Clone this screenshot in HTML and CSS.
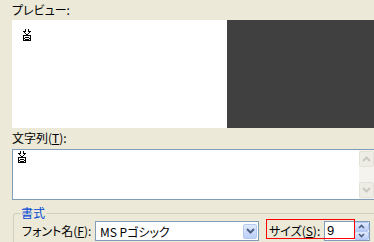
FILE: index.html
```html
<!DOCTYPE html>
<html lang="ja">
<head>
    <meta charset="UTF-8">
    <title>フォント設定</title>
    <link rel="stylesheet" href="styles.css">
</head>
<body>
    <!-- プレビュー -->
    <div class="caption">プレビュー:</div>
    <div class="preview">
        <div class="preview-sample">
            <svg class="glyph" width="8" height="12" viewBox="0 0 8 12" shape-rendering="crispEdges">
                <rect x="2" y="0" width="1" height="2"/><rect x="5" y="0" width="1" height="2"/>
                <rect x="0" y="2" width="3" height="1"/><rect x="5" y="2" width="3" height="1"/>
                <rect x="1" y="3" width="1" height="1"/><rect x="6" y="3" width="1" height="1"/>
                <rect x="2" y="4" width="1" height="1"/><rect x="5" y="4" width="1" height="1"/>
                <rect x="3" y="5" width="2" height="1"/>
                <rect x="0.5" y="6.5" width="7" height="5" fill="none" stroke="#000"/>
                <rect x="2" y="8" width="4" height="1"/><rect x="2" y="10" width="4" height="1"/>
                <rect x="1" y="9" width="1" height="1"/><rect x="6" y="9" width="1" height="1"/>
            </svg>
        </div>
        <div class="preview-back"></div>
    </div>

    <!-- 文字列 -->
    <div class="caption caption-text">文字列(<u>T</u>):</div>
    <div class="textbox">
        <div class="textbox-body">
            <svg class="glyph" width="8" height="12" viewBox="0 0 8 12" shape-rendering="crispEdges">
                <rect x="2" y="0" width="1" height="2"/><rect x="5" y="0" width="1" height="2"/>
                <rect x="0" y="2" width="3" height="1"/><rect x="5" y="2" width="3" height="1"/>
                <rect x="1" y="3" width="1" height="1"/><rect x="6" y="3" width="1" height="1"/>
                <rect x="2" y="4" width="1" height="1"/><rect x="5" y="4" width="1" height="1"/>
                <rect x="3" y="5" width="2" height="1"/>
                <rect x="0.5" y="6.5" width="7" height="5" fill="none" stroke="#000"/>
                <rect x="2" y="8" width="4" height="1"/><rect x="2" y="10" width="4" height="1"/>
                <rect x="1" y="9" width="1" height="1"/><rect x="6" y="9" width="1" height="1"/>
            </svg>
        </div>
        <div class="scrollbar">
            <div class="sb-btn">
                <svg width="9" height="6" viewBox="0 0 9 6"><polyline points="1,5 4.5,1.5 8,5" fill="none" stroke="#c9c8bd" stroke-width="2"/></svg>
            </div>
            <div class="sb-track"></div>
            <div class="sb-btn">
                <svg width="9" height="6" viewBox="0 0 9 6"><polyline points="1,1 4.5,4.5 8,1" fill="none" stroke="#c9c8bd" stroke-width="2"/></svg>
            </div>
        </div>
    </div>

    <!-- 書式 -->
    <fieldset class="format">
        <legend>書式</legend>
        <div class="format-row">
            <span class="field-label font-label">フォント名(<u>F</u>):</span>
            <div class="combo">
                <span class="combo-value">MS Pゴシック</span>
                <span class="combo-btn">
                    <svg width="9" height="6" viewBox="0 0 9 6"><polyline points="1,1 4.5,4.5 8,1" fill="none" stroke="#4d6185" stroke-width="2"/></svg>
                </span>
            </div>
            <div class="size-field">
                <span class="field-label size-label">サイズ(<u>S</u>):</span>
                <div class="spin">
                    <span class="spin-value">9</span>
                    <div class="spin-btns">
                        <span class="spin-btn"><svg width="7" height="5" viewBox="0 0 7 5"><polyline points="1,4 3.5,1.5 6,4" fill="none" stroke="#4d6185" stroke-width="1.6"/></svg></span>
                        <span class="spin-btn"><svg width="7" height="5" viewBox="0 0 7 5"><polyline points="1,1 3.5,3.5 6,1" fill="none" stroke="#4d6185" stroke-width="1.6"/></svg></span>
                    </div>
                </div>
                <div class="highlight"></div>
            </div>
        </div>
    </fieldset>
</body>
</html>
```

FILE: styles.css
```css
body {
    margin: 0;
    width: 374px;
    height: 242px;
    overflow: hidden;
    background-color: #ece9d8;
    color: #000;
    font-family: "Noto Sans CJK JP", "Liberation Sans", sans-serif;
    font-size: 12px;
    font-feature-settings: "palt";
}
.caption {
    height: 20px;
    line-height: 20px;
    padding-left: 12px;
}
.caption-text {
    height: 21px;
}
.glyph {
    display: block;
}
.glyph rect {
    fill: #000;
}
.glyph rect[fill="none"] {
    fill: none;
}

/* プレビュー */
.preview {
    display: flex;
    margin-left: 12px;
    height: 108px;
}
.preview-sample {
    width: 215px;
    background-color: #fff;
    padding: 9px 0 0 11px;
    box-sizing: border-box;
}
.preview-back {
    flex: 1;
    background-color: #404040;
}

/* 文字列 */
.textbox {
    display: flex;
    margin-left: 12px;
    width: 362px;
    height: 51px;
    border: 1px solid #7f9db9;
    border-right: none; /* 右端は画面外 */
    box-sizing: border-box;
    background-color: #fff;
}
.textbox-body {
    flex: 1;
    padding: 1px 0 0 5px;
}
.scrollbar {
    width: 15px;
    display: flex;
    flex-direction: column;
    background-color: #f4f3ee;
}
.sb-btn {
    height: 16px;
    margin: 1px 0;
    display: flex;
    align-items: center;
    justify-content: center;
    background-color: #eeede5;
    border: 1px solid #e4e2d8;
    border-radius: 2px;
    box-sizing: border-box;
}
.sb-track {
    flex: 1;
}

/* 書式 */
.format {
    margin: 7px 0 0 13px;
    padding: 0 0 0 8px;
    width: 361px;
    box-sizing: border-box;
    border: 1px solid #d0d0bf;
    border-right: none;
    border-radius: 3px 0 0 3px;
    min-width: 0;
}
.format legend {
    padding: 0 1px;
    margin-left: -2px;
    line-height: 12px;
    color: #0046d5;
}
.format-row {
    display: flex;
    padding-top: 2px;
    height: 30px;
}
.field-label {
    line-height: 20px;
    white-space: nowrap;
}
.font-label {
    width: 73px;
}
.combo {
    width: 164px;
    height: 20px;
    display: flex;
    align-items: center;
    border: 1px solid #7f9db9;
    box-sizing: border-box;
    background-color: #fff;
}
.combo-value {
    flex: 1;
    padding-left: 4px;
    white-space: nowrap;
}
.combo-btn {
    width: 14px;
    height: 15px;
    margin-right: 1px;
    display: flex;
    align-items: center;
    justify-content: center;
    border: 1px solid #b5c8f2;
    border-radius: 2px;
    box-sizing: border-box;
    background: linear-gradient(#e0e9fd, #bccff8);
}
.size-field {
    position: relative;
    display: flex;
    margin-left: 7px;
}
.size-label {
    width: 55px;
    padding-left: 3px;
}
.spin {
    width: 46px;
    height: 20px;
    display: flex;
    border: 1px solid #7f9db9;
    box-sizing: border-box;
    background-color: #fff;
}
.spin-value {
    flex: 1;
    padding-left: 2px;
    line-height: 18px;
    font-family: "Liberation Sans", sans-serif;
    font-size: 13px;
}
.spin-btns {
    width: 15px;
    display: flex;
    flex-direction: column;
}
.spin-btn {
    flex: 1;
    display: flex;
    align-items: center;
    justify-content: center;
    border: 1px solid #b5c8f2;
    border-radius: 2px;
    background: linear-gradient(#e0e9fd, #bccff8);
}
.highlight {
    position: absolute;
    left: 0;
    top: -2px;
    width: 89px;
    height: 20px;
    border: 1px solid #f00;
    box-sizing: border-box;
}
```
